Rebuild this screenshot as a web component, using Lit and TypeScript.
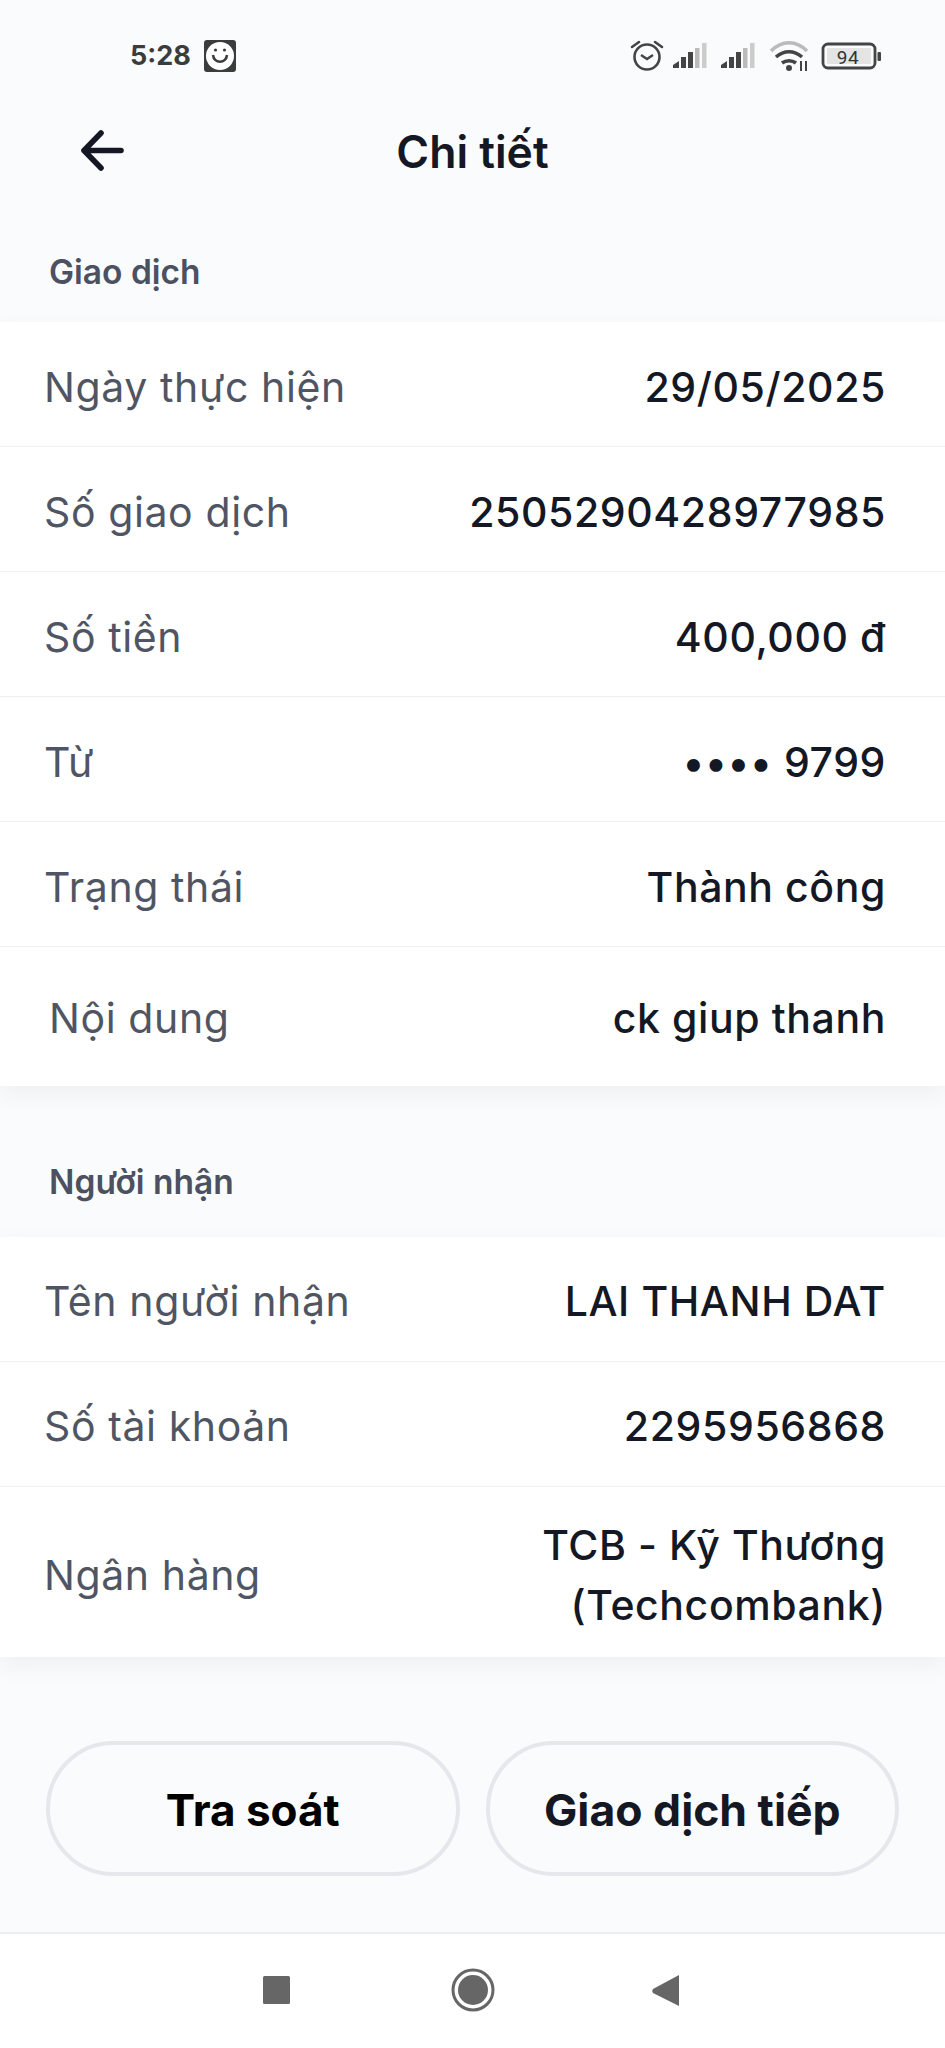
import { LitElement, html, css, svg } from "lit";
import { customElement } from "lit/decorators.js";

const card1 = [
  ["Ngày thực hiện", "29/05/2025"],
  ["Số giao dịch", "2505290428977985"],
  ["Số tiền", "400,000 đ"],
  ["Từ", "•••• 9799"],
  ["Trạng thái", "Thành công"],
];
const card2 = [
  ["Tên người nhận", "LAI THANH DAT"],
  ["Số tài khoản", "2295956868"],
];

const bars = (x: number) => svg`
  <path d="M${x} 68v-3l6-4v7z" fill="#444"/><rect x="${x + 8}" y="57" width="5" height="11" fill="#444"/>
  <rect x="${x + 15}" y="52" width="5" height="16" fill="#444"/><rect x="${x + 22}" y="48" width="4.5" height="20" fill="#bbb"/>
  <rect x="${x + 29}" y="43" width="4.5" height="25" fill="#ccc"/>`;

@customElement("app-root")
export class AppRoot extends LitElement {
  static styles = css`
    :host { display: block; width: 945px; height: 2048px; overflow: hidden; background: #fafbfc; font-family: Inter, "Noto Sans", sans-serif; color: #141824; }
    .page { height: 2048px; display: flex; flex-direction: column; }
    .status { height: 102px; position: relative; flex: none; }
    .time { position: absolute; left: 130px; top: 39px; font: 700 27px/34px Inter, sans-serif; color: #3c3c3c; }
    .status svg { position: absolute; left: 0; top: 0; }
    .top { height: 100px; display: flex; align-items: center; justify-content: center; position: relative; flex: none; }
    .top h1 { margin: 0; font-size: 44.5px; font-weight: 600; line-height: 50px; }
    .back { position: absolute; left: 76px; top: 26px; }
    .sec { margin: 0; padding-left: 49px; font-size: 33.5px; font-weight: 600; color: #4b5160; line-height: 40px; }
    .s1 { padding-top: 50px; height: 70px; }
    .s2 { padding-top: 76px; height: 75px; }
    .card { background: #fff; box-shadow: 0 8px 24px rgba(20, 24, 36, 0.05); }
    .row { display: flex; justify-content: space-between; align-items: center; box-sizing: border-box; height: 125px; padding: 5px 59px 0 44px; border-bottom: 1px solid #eef0f3; }
    .row:last-child { border-bottom: 0; }
    .label { font-size: 41px; color: #4f5563; letter-spacing: 0.6px; }
    .value { font-size: 41px; font-weight: 500; letter-spacing: 0.6px; text-align: right; line-height: 60px; }
    .tall { height: 139px; padding-top: 2px; padding-left: 49px; }
    .bank { height: 170px; }
    .second .row:not(.bank) { padding-top: 3px; }
    .actions { display: flex; gap: 26px; padding: 84px 46px 0; flex: none; }
    .btn { flex: 1; height: 135px; padding-top: 3px; border: 4px solid #e6e7ec; border-radius: 68px; box-sizing: border-box; display: flex; align-items: center; justify-content: center; font-size: 44.5px; font-weight: 700; color: #141824; }
    .btn.black { color: #000; font-size: 44px; }
    .nav { margin-top: auto; height: 114px; background: #fff; border-top: 2px solid #eceef1; position: relative; flex: none; }
    .nav svg { position: absolute; left: 0; top: 0; }
  `;

  renderRow(r: string[], cls = "") {
    return html`<div class="row ${cls}"><span class="label">${r[0]}</span><span class="value">${r[1]}</span></div>`;
  }

  render() {
    return html`<div class="page">
      <div class="status">
        <span class="time">5:28</span>
        <svg width="945" height="102" viewBox="0 0 945 102" fill="none">
          <rect x="204" y="40" width="32" height="32" rx="3" fill="#3c3c3c"/>
          <circle cx="220" cy="56" r="14" fill="#fff"/>
          <path d="M213 55c1 9 13 9 14 0" stroke="#3c3c3c" stroke-width="2.6"/>
          <circle cx="215.5" cy="50" r="1.6" fill="#3c3c3c"/><circle cx="224.5" cy="50" r="1.6" fill="#3c3c3c"/>
          <circle cx="647" cy="57" r="12.5" stroke="#444" stroke-width="2.6"/>
          <path d="M641 55l6 4 6-4" stroke="#444" stroke-width="2.4"/>
          <path d="M632 47l7-5M662 47l-7-5" stroke="#444" stroke-width="2.6" stroke-linecap="round"/>
          ${bars(673)}${bars(721)}
          <path d="M771 51c11-11 25-11 36 0" stroke="#bbb" stroke-width="3.6"/>
          <path d="M776 57c8-7 18-7 26 0M782 63c4-3 10-3 14 0" stroke="#444" stroke-width="3.6"/>
          <circle cx="789" cy="68" r="3" fill="#444"/>
          <path d="M801 61v10M806 61v10" stroke="#444" stroke-width="2"/>
          <rect x="823" y="44" width="52" height="24" rx="5" stroke="#444" stroke-width="2.8"/>
          <rect x="827" y="48" width="44" height="16" fill="#e4e4e4"/>
          <rect x="877.5" y="52" width="3.5" height="9" rx="1" fill="#444"/>
          <text x="848" y="64" text-anchor="middle" font-family="Roboto, sans-serif" font-size="19" fill="#333" letter-spacing="0.5">94</text>
        </svg>
      </div>
      <div class="top">
        <svg class="back" width="50" height="50" viewBox="0 0 50 50" fill="none"><path d="M8 22.5h37M25 5L8 22.5 25 40" stroke="#141824" stroke-width="5.6" stroke-linecap="round" stroke-linejoin="round"/></svg>
        <h1>Chi tiết</h1>
      </div>
      <p class="sec s1">Giao dịch</p>
      <div class="card">
        ${card1.map((r) => this.renderRow(r))}
        ${this.renderRow(["Nội dung", "ck giup thanh"], "tall")}
      </div>
      <p class="sec s2">Người nhận</p>
      <div class="card second">
        ${card2.map((r) => this.renderRow(r))}
        <div class="row bank"><span class="label">Ngân hàng</span><span class="value">TCB - Kỹ Thương<br />(Techcombank)</span></div>
      </div>
      <div class="actions">
        <div class="btn black">Tra soát</div>
        <div class="btn">Giao dịch tiếp</div>
      </div>
      <div class="nav">
        <svg width="945" height="112" viewBox="0 0 945 112" fill="none">
          <rect x="263" y="42" width="27" height="28" rx="1.5" fill="#666"/>
          <circle cx="473" cy="56" r="20" stroke="#666" stroke-width="3"/>
          <circle cx="473" cy="56" r="15" fill="#666"/>
          <path d="M679 41v31l-26-13a3 3 0 010-4z" fill="#666"/>
        </svg>
      </div>
    </div>`;
  }
}
